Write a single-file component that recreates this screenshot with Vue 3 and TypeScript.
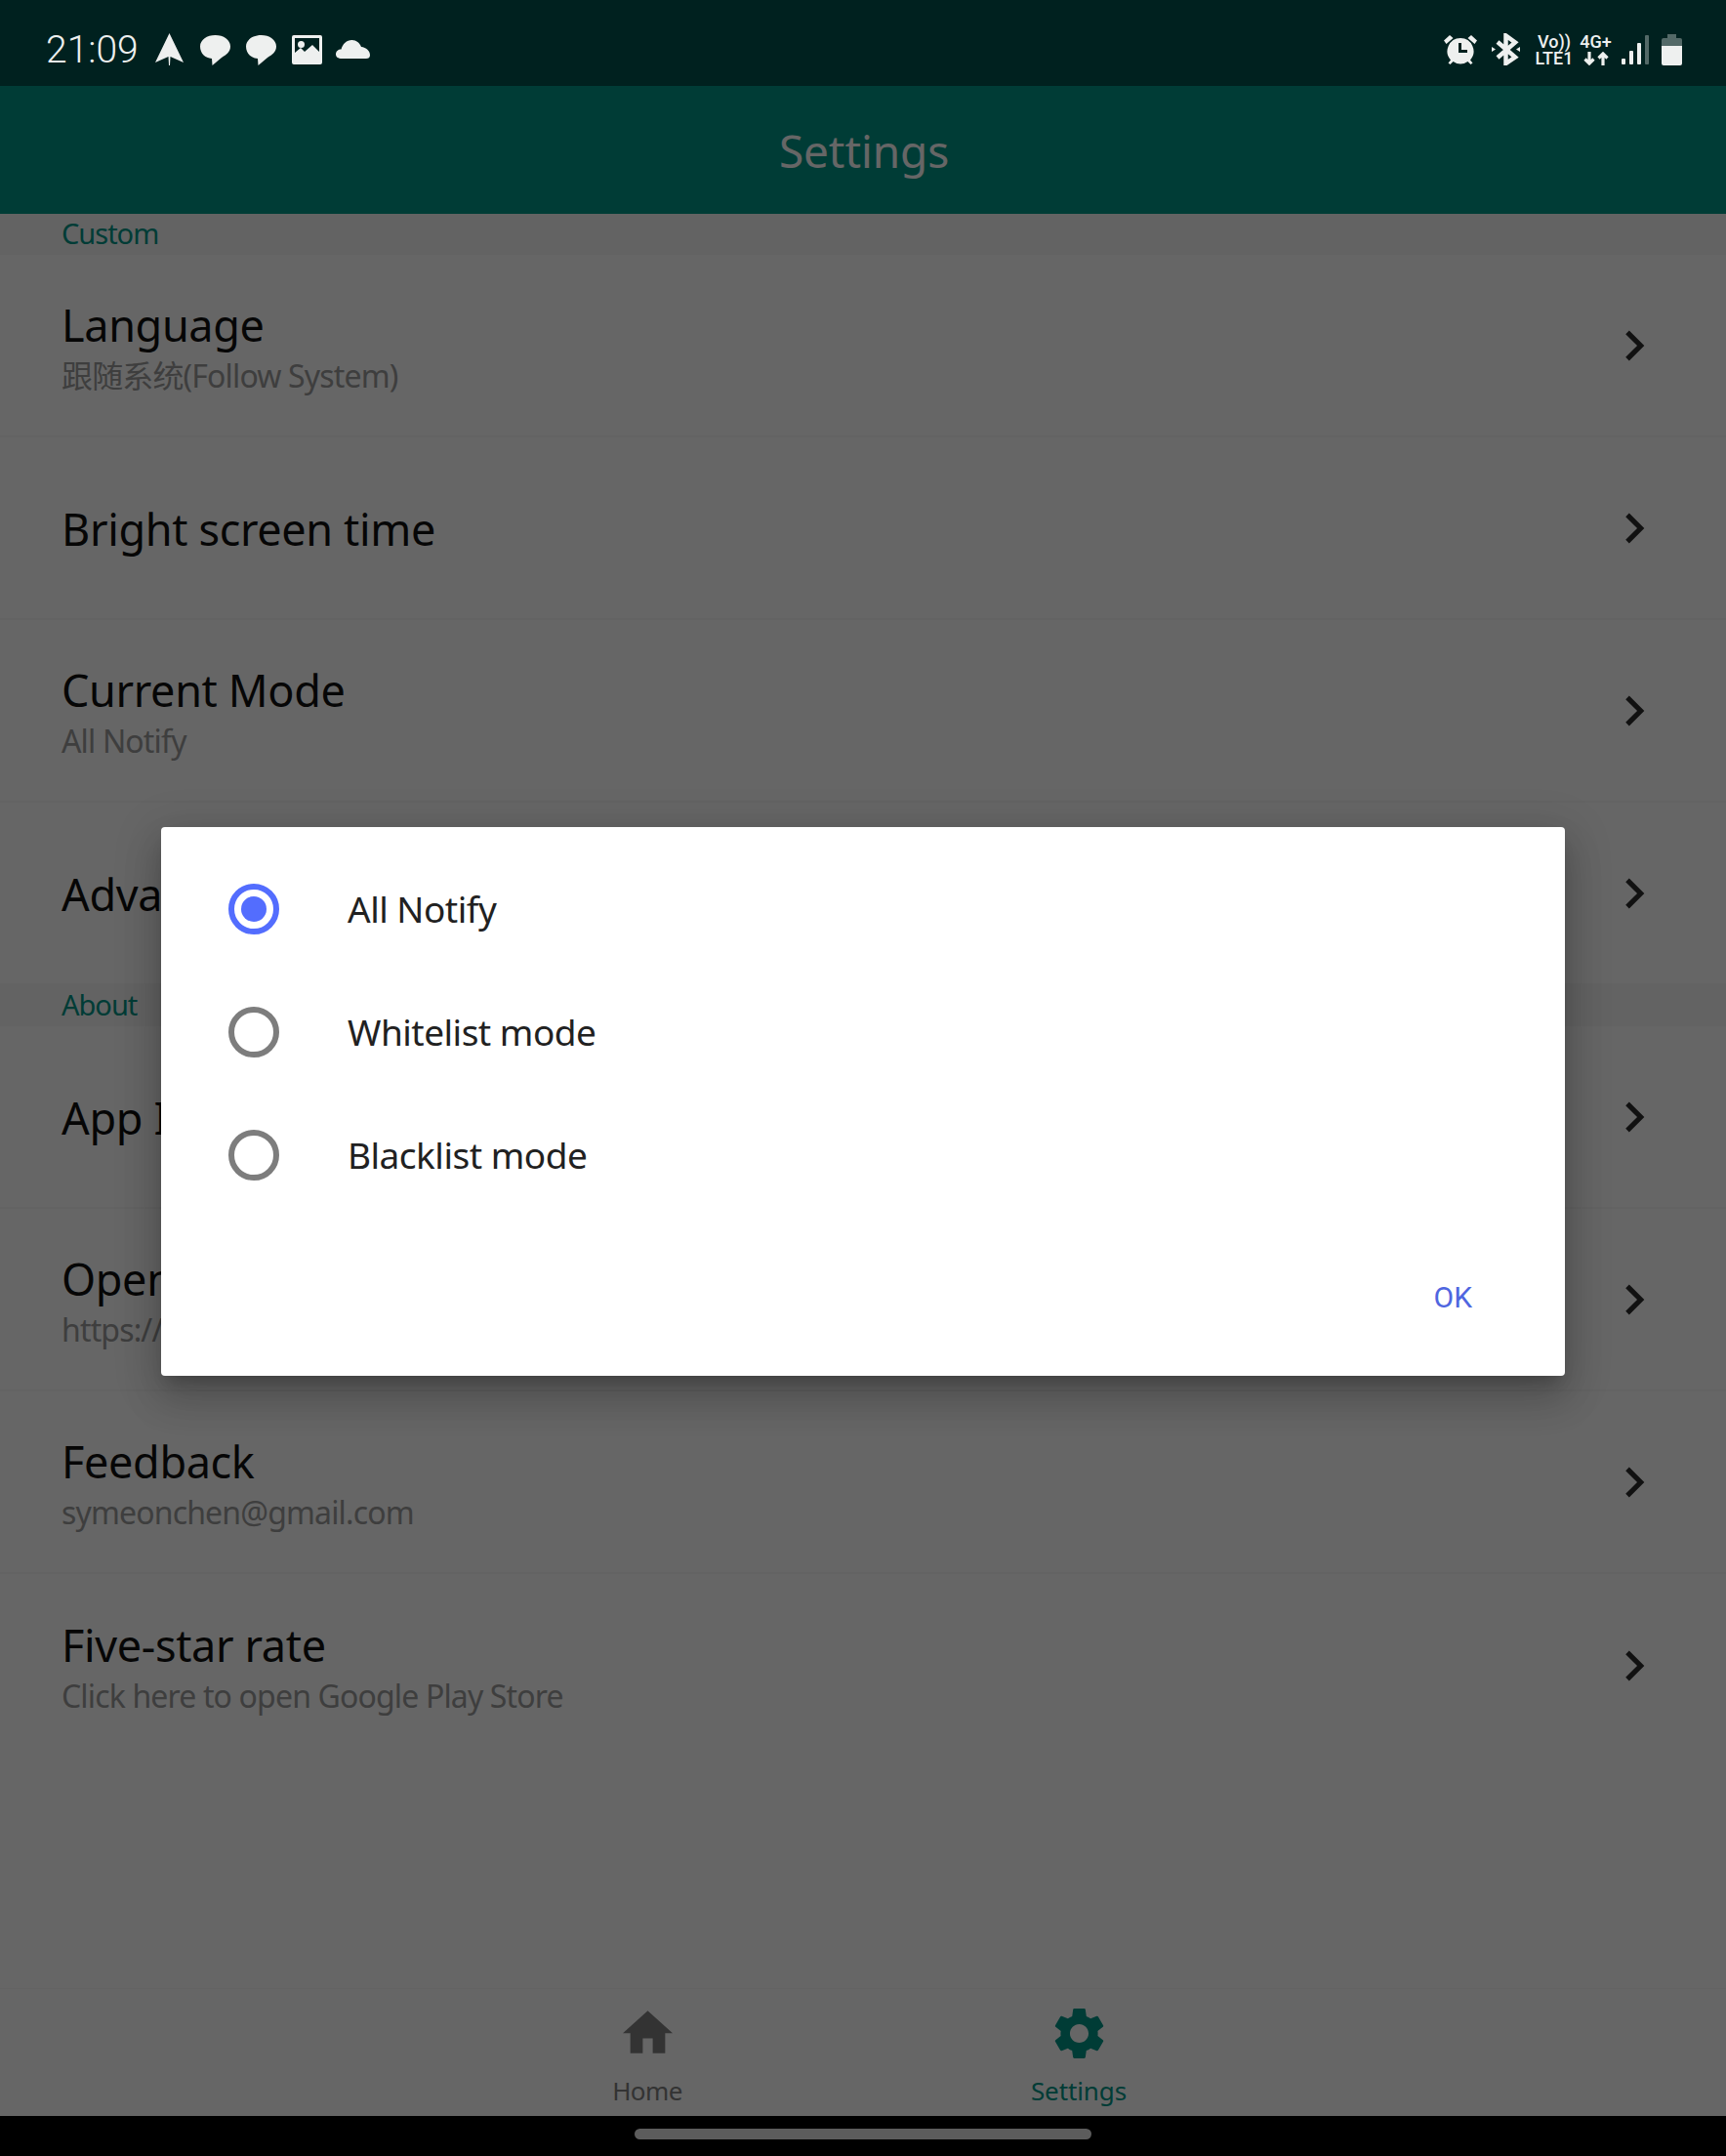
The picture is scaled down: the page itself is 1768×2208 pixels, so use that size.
<script setup lang="ts">
import { ref } from 'vue';

interface Row {
  title: string;
  sub?: string;
}

interface Section {
  name: string;
  rows: Row[];
}

const sections: Section[] = [
  {
    name: 'Custom',
    rows: [
      { title: 'Language', sub: '跟随系统(Follow System)' },
      { title: 'Bright screen time' },
      { title: 'Current Mode', sub: 'All Notify' },
      { title: 'Advanced' },
    ],
  },
  {
    name: 'About',
    rows: [
      { title: 'App Info' },
      { title: 'Open source', sub: 'https://github.com/SimonCherryGZ' },
      { title: 'Feedback', sub: 'symeonchen@gmail.com' },
      { title: 'Five-star rate', sub: 'Click here to open Google Play Store' },
    ],
  },
];

const modes = ['All Notify', 'Whitelist mode', 'Blacklist mode'];
const selected = ref('All Notify');
</script>

<template>
  <div class="screen">
    <div class="status">
      <div class="status-left">
        <span class="time">21:09</span>
        <svg class="i-nav" viewBox="0 0 29 33"><path d="M14.500 0 29 30 15.500 24 15 33h-1l-.5-9L0 30z" /></svg>
        <svg class="i-bubble" viewBox="0 0 31 31"><path d="M15.500 0C24 0 31 4.800 31 11.500 31 17 27 20 22 23L12.500 31 12 24C5 23.500 0 18.500 0 11.500 0 4.800 7 0 15.500 0z" /></svg>
        <svg class="i-bubble" viewBox="0 0 31 31"><path d="M15.500 0C24 0 31 4.800 31 11.500 31 17 27 20 22 23L12.500 31 12 24C5 23.500 0 18.500 0 11.500 0 4.800 7 0 15.500 0z" /></svg>
        <svg class="i-image" viewBox="0 0 31 30"><path fill-rule="evenodd" d="M2 0h27a2 2 0 0 1 2 2v26a2 2 0 0 1-2 2H2a2 2 0 0 1-2-2V2a2 2 0 0 1 2-2zm1 3v15l6-5 4 4 8-7 7 7V3zM9.500 6a3.500 3.500 0 1 1 0 7 3.500 3.500 0 0 1 0-7z" /></svg>
        <svg class="i-cloud" viewBox="0 0 35 19"><path d="M6 19C2.500 19 0 17.500 0 14.500 0 11.500 2.500 9.500 5.500 9.500 7 4 11 0 16.500 0 21 0 24.500 3 26 7 31 7.500 35 11 35 15.500 35 18 33.500 19 31 19z" /></svg>
      </div>
      <div class="status-right">
        <svg class="i-alarm" viewBox="0 0 34 30">
          <path d="M6 0 9.500 3 2.500 9 0 5.500zM28 0l6 5.500L31.500 9l-7-6z" />
          <path fill-rule="evenodd" d="M17 3a13.500 13.500 0 0 1 10 22.500l2.500 3L27.500 30l-3-3a13.500 13.500 0 0 1-15 0l-3 3-2-1.500 2.500-3A13.500 13.500 0 0 1 17 3zm-2 5v10h9v-3h-6V8z" />
        </svg>
        <svg class="i-bt" viewBox="0 0 29 33">
          <path class="line" d="M6 9l18 15.500L14.500 31V2.500L24 9.500 6 25" />
          <path class="solid" d="M0 14l4 2.500L0 19zM29 14l-4 2.500 4 2.500z" />
        </svg>
        <div class="stack volte">
          <span>Vo))</span>
          <span>LTE1</span>
        </div>
        <div class="stack net">
          <span>4G+</span>
          <svg viewBox="0 0 26 14"><path d="M6 0v12M1.500 7.500 6 12l4.500-4.500M20 14V2M15.500 6.500 20 2l4.500 4.500" /></svg>
        </div>
        <svg class="i-signal" viewBox="0 0 28 30">
          <rect x="0" y="24" width="4" height="6" rx="1" />
          <rect x="8" y="16" width="4" height="14" rx="1" />
          <rect x="16" y="8" width="4" height="22" rx="1" />
          <rect x="24" y="0" width="4" height="30" rx="1" opacity=".35" />
        </svg>
        <svg class="i-battery" viewBox="0 0 21 32">
          <path d="M6 0h9v4h4a2 2 0 0 1 2 2v6H0V6a2 2 0 0 1 2-2h4z" opacity=".35" />
          <path d="M0 12h21v18a2 2 0 0 1-2 2H2a2 2 0 0 1-2-2z" />
        </svg>
      </div>
    </div>

    <div class="app">
      <header class="toolbar">Settings</header>

      <main class="content">
        <section v-for="section in sections" :key="section.name">
          <div class="section-name">{{ section.name }}</div>
          <div v-for="row in section.rows" :key="row.title" class="row">
            <div class="row-text">
              <div class="row-title">{{ row.title }}</div>
              <div v-if="row.sub" class="row-sub">{{ row.sub }}</div>
            </div>
            <svg class="chevron" viewBox="0 0 24 24"><path d="M10 6 8.590 7.410 13.170 12l-4.580 4.590L10 18l6-6z" /></svg>
          </div>
        </section>
      </main>

      <nav class="tabs">
        <div class="tab">
          <svg class="tab-home" viewBox="2 3 20 17"><path d="M10 20v-6h4v6h5v-8h3L12 3 2 12h3v8z" /></svg>
          <span>Home</span>
        </div>
        <div class="tab active">
          <svg class="tab-gear" viewBox="2.400 2 19.200 20"><path d="M19.140 12.940c.04-.3.06-.61.06-.94 0-.32-.02-.64-.07-.94l2.030-1.580c.18-.14.23-.41.12-.61l-1.920-3.320c-.12-.22-.37-.29-.59-.22l-2.390.96c-.5-.38-1.030-.7-1.620-.94l-.36-2.540c-.04-.24-.24-.41-.48-.41h-3.840c-.24 0-.43.17-.47.41l-.36 2.540c-.59.24-1.130.57-1.620.94l-2.390-.96c-.22-.08-.47 0-.59.22L2.740 8.870c-.12.21-.08.47.12.61l2.030 1.580c-.05.3-.09.63-.09.94s.02.64.07.94l-2.030 1.580c-.18.14-.23.41-.12.61l1.920 3.320c.12.22.37.29.59.22l2.390-.96c.5.38 1.030.7 1.620.94l.36 2.540c.05.24.24.41.48.41h3.840c.24 0 .44-.17.47-.41l.36-2.540c.59-.24 1.130-.56 1.620-.94l2.390.96c.22.08.47 0 .59-.22l1.920-3.320c.12-.22.07-.47-.12-.61l-2.010-1.580zM12 15.600c-1.980 0-3.600-1.620-3.600-3.600s1.620-3.600 3.600-3.600 3.600 1.620 3.600 3.600-1.620 3.600-3.600 3.600z" /></svg>
          <span>Settings</span>
        </div>
      </nav>

      <div class="scrim">
        <div class="dialog">
          <label v-for="mode in modes" :key="mode" class="option" @click="selected = mode">
            <span class="radio" :class="{ on: selected === mode }"></span>
            <span>{{ mode }}</span>
          </label>
          <div class="actions">
            <button class="ok" type="button">OK</button>
          </div>
        </div>
      </div>
    </div>

    <div class="gesture">
      <div class="pill"></div>
    </div>
  </div>
</template>

<style>
html,
body {
  margin: 0;
  background: #000;
}
</style>

<style scoped>
.screen {
  width: 1768px;
  height: 2208px;
  display: flex;
  flex-direction: column;
  overflow: hidden;
  font-family: 'Noto Sans', 'Noto Sans CJK SC', sans-serif;
}

.status {
  height: 88px;
  flex: none;
  display: flex;
  justify-content: space-between;
  align-items: center;
  padding: 13px 47px 0;
  padding-right: 45px;
  box-sizing: border-box;
  background: #00211f;
  color: #eef0ef;
}

.status svg {
  fill: #eef0ef;
  display: block;
}

.status-left,
.status-right {
  display: flex;
  align-items: center;
}

.time {
  font-family: Roboto, sans-serif;
  font-weight: 300;
  font-size: 39px;
  line-height: 52px;
  width: 112px;
}

.i-nav {
  width: 29px;
  height: 33px;
  margin-right: 17px;
}

.i-bubble {
  width: 31px;
  height: 31px;
  margin-top: 1px;
  margin-right: 16px;
}

.i-image {
  width: 31px;
  height: 30px;
  margin-top: 1px;
  margin-right: 14px;
}

.i-cloud {
  width: 35px;
}

.i-alarm {
  width: 34px;
  height: 30px;
  margin-right: 15px;
  margin-left: 3px;
}

.i-bt {
  width: 29px;
  height: 33px;
  margin-right: 15px;
}

.status .i-bt .line {
  fill: none;
  stroke: #eef0ef;
  stroke-width: 4.500px;
}

.stack {
  display: flex;
  flex-direction: column;
  align-items: center;
  font-family: Roboto, sans-serif;
  font-weight: 500;
  font-size: 18px;
  line-height: 17px;
}

.volte {
  width: 40px;
  margin-right: 7px;
}

.net {
  width: 31px;
  margin-right: 11px;
  margin-top: -1px;
}

.status .net svg {
  width: 26px;
  height: 14px;
  fill: none;
  stroke: #eef0ef;
  stroke-width: 3.2px;
  margin-top: 2px;
}

.i-signal {
  width: 28px;
  height: 30px;
  margin-right: 13px;
}

.i-battery {
  width: 21px;
  height: 32px;
}

.app {
  flex: 1;
  min-height: 0;
  position: relative;
  display: flex;
  flex-direction: column;
  background: #fff;
}

.toolbar {
  height: 131px;
  flex: none;
  display: flex;
  align-items: center;
  justify-content: center;
  background: #009688;
  color: #fff;
  font-size: 46px;
  letter-spacing: -.1px;
  padding-left: 2px;
}

.content {
  flex: 1;
  min-height: 0;
}

.section-name {
  height: 42px;
  box-sizing: border-box;
  padding-left: 63px;
  background: #f8f8f8;
  color: #009688;
  font-size: 29px;
  line-height: 40px;
  letter-spacing: -1px;
}

.row {
  height: 187px;
  box-sizing: border-box;
  display: flex;
  align-items: center;
  justify-content: space-between;
  padding: 0 63px;
  background: #fff;
  border-bottom: 2px solid #f8f8f8;
}

section:last-child .row:last-child {
  border-bottom: 0;
}

.row-text {
  display: flex;
  flex-direction: column;
  justify-content: center;
  padding-top: 2px;
}

.row-title {
  font-size: 45px;
  line-height: 60px;
  letter-spacing: -.35px;
  color: #111;
}

.row-sub {
  font-size: 32px;
  line-height: 44px;
  letter-spacing: -.85px;
  color: #9b9b9b;
}

.chevron {
  width: 62px;
  height: 62px;
  fill: #2c2c2c;
}

.tabs {
  height: 131px;
  flex: none;
  display: flex;
  justify-content: center;
  background: #fff;
  border-top: 1px solid #f8f8f8;
  box-sizing: border-box;
}

.tab {
  width: 442px;
  display: flex;
  flex-direction: column;
  align-items: center;
  color: #808080;
  font-size: 26px;
  line-height: 36px;
  letter-spacing: -.6px;
}

.tab svg {
  display: block;
}

.tab-home {
  width: 51px;
  height: 44px;
  margin-top: 22px;
  margin-bottom: 20px;
  fill: #808080;
}

.tab-gear {
  width: 51px;
  height: 53px;
  margin-top: 19px;
  margin-bottom: 14px;
  fill: #009688;
}

.tab.active {
  color: #009688;
  letter-spacing: -.1px;
}

.scrim {
  position: absolute;
  inset: 0;
  background: rgba(0, 0, 0, .6);
  display: flex;
  justify-content: center;
  align-items: flex-start;
}

.dialog {
  width: 1438px;
  height: 562px;
  margin-top: 759px;
  box-sizing: border-box;
  padding-top: 21px;
  background: #fff;
  border-radius: 4px;
  box-shadow: 0 24px 38px 3px rgba(0, 0, 0, .14), 0 9px 46px 8px rgba(0, 0, 0, .12), 0 11px 15px -7px rgba(0, 0, 0, .2);
  display: flex;
  flex-direction: column;
}

.option {
  height: 126px;
  flex: none;
  display: flex;
  align-items: center;
  padding-left: 69px;
  padding-bottom: 2px;
  box-sizing: border-box;
  font-size: 37px;
  letter-spacing: -.5px;
  color: #212121;
}

.radio {
  width: 52px;
  height: 52px;
  box-sizing: border-box;
  border: 6px solid #7d7d7d;
  border-radius: 50%;
  margin-top: 2px;
  margin-right: 70px;
  display: flex;
  align-items: center;
  justify-content: center;
}

.radio.on {
  border-color: #536dfe;
}

.radio.on::after {
  content: '';
  width: 26px;
  height: 26px;
  border-radius: 50%;
  background: #536dfe;
}

.actions {
  display: flex;
  justify-content: flex-end;
  padding: 63px 95px 0 0;
}

.ok {
  border: 0;
  padding: 0;
  background: none;
  font-family: Roboto, sans-serif;
  font-size: 30px;
  line-height: 40px;
  color: #4f66e0;
}

.gesture {
  height: 41px;
  flex: none;
  background: #000;
  display: flex;
  justify-content: center;
  padding-top: 13px;
  box-sizing: border-box;
}

.pill {
  width: 468px;
  height: 11px;
  border-radius: 6px;
  background: #5c5c5c;
}
</style>
